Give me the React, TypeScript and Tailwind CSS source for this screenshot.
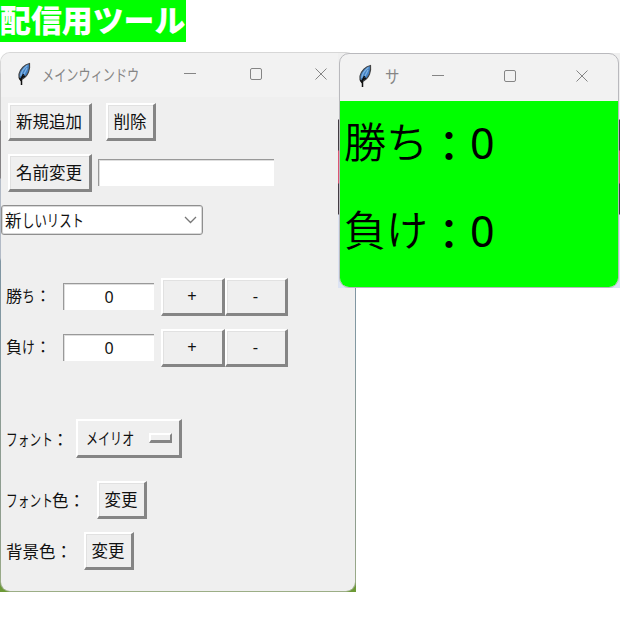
import React from "react";
import clsx from "clsx";

const App = () => {
  return (
    <div className="relative w-[620px] h-[620px] overflow-hidden bg-white text-[#111] font-['Noto_Sans_CJK_JP',sans-serif]">
      <h1 className="w-[186px] h-[42px] bg-[#00ff00] text-white text-[30.9px] leading-[38px] font-black whitespace-nowrap">
        配信用ツール
      </h1>

      <MainWindow />
      <ScoreWindow />
    </div>
  );
};

const MainWindow = () => {
  return (
    <div className="absolute left-0 top-[52px] w-[356px] h-[540px] p-px bg-[linear-gradient(to_bottom,#fff_0,#fff_20px,#d8d8d8_22px,#d8d8d8_68px,#332e33_69px,#332e33_126px,#a4b6d4_127px,#a4b6d4_206px,#235a7c_209px,#2d6478_300px,#476b55_370px,#4c7048_480px,#6d9a36_539px)]">
      <div className="w-[354px] h-[538px] rounded-[9px] bg-[#efefef] overflow-hidden shadow-[0_0_0_1px_#bdbdbd99]">
        <div className="flex items-center h-[44px] pl-[14px] pb-[2px] bg-[#f2f2f2] text-[#858585]">
          <Feather />
          <Label className="w-[97px] ml-[10px] text-[16px]" squeeze="scale-x-[0.76]">
            メインウィンドウ
          </Label>
          <Controls className="ml-[45px] gap-[53.5px]" />
        </div>

        <div className="flex flex-col items-start">
          <div className="flex ml-[7px] mt-[6px] gap-[14px]">
            <Button className="w-[84px]">新規追加</Button>
            <Button className="w-[50px]">削除</Button>
          </div>

          <div className="flex items-center ml-[7px] mt-[14px] gap-[6px]">
            <Button className="w-[84px]">名前変更</Button>
            <Entry className="w-[176px] mb-px" />
          </div>

          <div className="flex items-center justify-between w-[202px] h-[30px] mt-[14px] pl-[3px] pr-[5px] border border-[#8f8f8f] rounded-[3px] bg-white shadow-[inset_0_0_0_1px_#d9d9d9]">
            <Label className="w-[80px] text-[16.5px]">
              新<Narrow className="w-[62px]" squeeze="scale-x-[0.75]">しいリスト</Narrow>
            </Label>
            <svg width="13" height="8" viewBox="0 0 13 8" fill="none" stroke="#777" strokeWidth="1.3">
              <path d="M1 1l5.5 5.5L12 1" />
            </svg>
          </div>

          <Counter
            className="mt-[43px]"
            label={
              <>
                勝<Narrow className="w-[13px]" squeeze="scale-x-[0.8]">ち</Narrow>：
              </>
            }
          />
          <Counter
            className="mt-[14px]"
            label={
              <>
                負<Narrow className="w-[13px]" squeeze="scale-x-[0.8]">け</Narrow>：
              </>
            }
          />

          <div className="flex items-center ml-[5px] mt-[53px]">
            <Label className="w-[70px] text-[16.5px]">
              <Narrow className="w-[46px]" squeeze="scale-x-[0.71]">フォント</Narrow>：
            </Label>
            <div className="flex items-center justify-between w-[106px] h-[39px] pl-[8px] pr-[7px] border-t-2 border-l-2 border-r-[3px] border-b-[3px] border-t-white border-l-white border-r-[#858585] border-b-[#858585]">
              <Label className="w-[49px] text-[16.5px]" squeeze="scale-x-[0.73]">
                メイリオ
              </Label>
              <div className="w-[23px] h-[10px] border-t-2 border-l-2 border-r-2 border-b-[3px] border-t-white border-l-white border-r-[#858585] border-b-[#858585]" />
            </div>
          </div>

          <div className="flex items-center ml-[5px] mt-[23px]">
            <Label className="w-[91px] text-[16.5px]">
              <Narrow className="w-[46px]" squeeze="scale-x-[0.71]">フォント</Narrow>色：
            </Label>
            <Button className="w-[50px]">変更</Button>
          </div>

          <div className="flex items-center ml-[5px] mt-[14px]">
            <Label className="w-[78px] text-[16.5px]">背景色：</Label>
            <Button className="w-[50px]">変更</Button>
          </div>
        </div>
      </div>
    </div>
  );
};

const ScoreWindow = () => {
  return (
    <div className="absolute left-[338px] top-[53px] w-[282px] h-[235px] px-px bg-[linear-gradient(to_bottom,#efefef_0,#efefef_66px,#433b43_67px,#433b43_97px,#dc5472_98px,#dc5472_130px,#433b43_131px,#433b43_161px,#dce3f3_162px)]">
      <div className="w-[280px] h-[235px] rounded-[10px] border border-[#b9b9bd] bg-[#f2f2f2]">
        <div className="flex items-center h-[47px] pl-[16px] pb-[3px] text-[#858585]">
          <Feather />
          <Label className="w-[14px] ml-[12px] text-[17px]" squeeze="scale-x-[0.85]">
            サ
          </Label>
          <Controls className="ml-[33px] gap-[60px]" />
        </div>
        <div className="h-[186px] pt-[11px] rounded-b-[9px] bg-[#00ff00] text-black">
          <ScoreLine label="勝ち" />
          <ScoreLine className="mt-[28px]" label="負け" />
        </div>
      </div>
    </div>
  );
};

const ScoreLine = ({ className, label }: { className?: string; label: string }) => {
  return (
    <div
      className={clsx(
        "flex items-center h-[60px] pl-[4px] pb-[4px] whitespace-nowrap leading-none text-[42px]",
        className,
      )}
    >
      <span className="w-[84px] font-[350]">{label}</span>
      <span className="w-[42px] pt-[7px] font-medium">：</span>
      <span className="text-[43px] pt-[5px] font-['Noto_Sans',sans-serif]">0</span>
    </div>
  );
};

const Counter = ({ className, label }: { className: string; label: React.ReactNode }) => {
  return (
    <div className={clsx("flex items-center ml-[5px]", className)}>
      <Label className="w-[57px] pb-[3px] text-[16px]">{label}</Label>
      <Entry className="w-[91px] mb-px">0</Entry>
      <Button className="w-[64px] ml-[7px] font-['Noto_Sans',sans-serif]">+</Button>
      <Button className="w-[63px] font-['Noto_Sans',sans-serif]">-</Button>
    </div>
  );
};

const Button = ({ className, children }: { className: string; children: React.ReactNode }) => {
  return (
    <button
      className={clsx(
        "h-[38px] pr-px border-t-2 border-l-2 border-r-[3px] border-b-[3px] border-t-white border-l-white border-r-[#858585] border-b-[#858585] shadow-[inset_1px_1px_0_#e1e1e1] text-[16.5px] leading-none whitespace-nowrap -mb-px",
        className,
      )}
    >
      {children}
    </button>
  );
};

const Entry = ({ className, children }: { className: string; children?: React.ReactNode }) => {
  return (
    <div
      className={clsx(
        "flex items-center justify-center h-[27px] border-t border-l border-t-[#999] border-l-[#999] bg-white shadow-[inset_1px_1px_0_#dedede] text-[16px] font-['Noto_Sans',sans-serif]",
        className,
      )}
    >
      {children}
    </div>
  );
};

// Condensed UI lettering: the glyphs are squeezed inside a box of fixed width
const Label = ({
  className,
  squeeze,
  children,
}: {
  className: string;
  squeeze?: string;
  children: React.ReactNode;
}) => {
  return (
    <div className={clsx("flex shrink-0 leading-[20px] whitespace-nowrap", className)}>
      {squeeze ? <span className={clsx("inline-block origin-left", squeeze)}>{children}</span> : children}
    </div>
  );
};

const Narrow = ({
  className,
  squeeze,
  children,
}: {
  className: string;
  squeeze: string;
  children: React.ReactNode;
}) => {
  return (
    <span className={clsx("inline-block", className)}>
      <span className={clsx("inline-block origin-left", squeeze)}>{children}</span>
    </span>
  );
};

const Controls = ({ className }: { className: string }) => {
  return (
    <div className={clsx("flex items-center", className)}>
      <svg width="12" height="12" viewBox="0 0 12 12" fill="none" stroke="currentColor">
        <path d="M0 5.5h12" />
      </svg>
      <svg width="12" height="12" viewBox="0 0 12 12" fill="none" stroke="currentColor">
        <rect x="0.5" y="0.5" width="11" height="11" rx="1.5" />
      </svg>
      <svg width="12" height="12" viewBox="0 0 12 12" fill="none" stroke="currentColor">
        <path d="M0.5 0.5l11 11M11.5 0.5l-11 11" />
      </svg>
    </div>
  );
};

const Feather = () => {
  return (
    <svg className="shrink-0" width="17" height="24" viewBox="0 0 17 24">
      <path
        d="M14.500 1.500C10 2 5 7 4 12c-.4 2 .2 4.500 1.500 6 3.500-1.500 6.500-4 8-8 1-3 1.400-6 1-8.500z"
        fill="#4381c4"
        stroke="#444"
        strokeWidth="1.2"
      />
      <path d="M12.500 3.500C9 6 6.500 9 5.800 14M12 6l-3 6" fill="none" stroke="#7fb2e2" strokeWidth="1.3" />
      <path d="M8.500 12l-2 4v7M7 15.500l3-1.500M4.500 16l2 3.500" fill="none" stroke="#111" strokeWidth="1.5" />
    </svg>
  );
};

export default App;
